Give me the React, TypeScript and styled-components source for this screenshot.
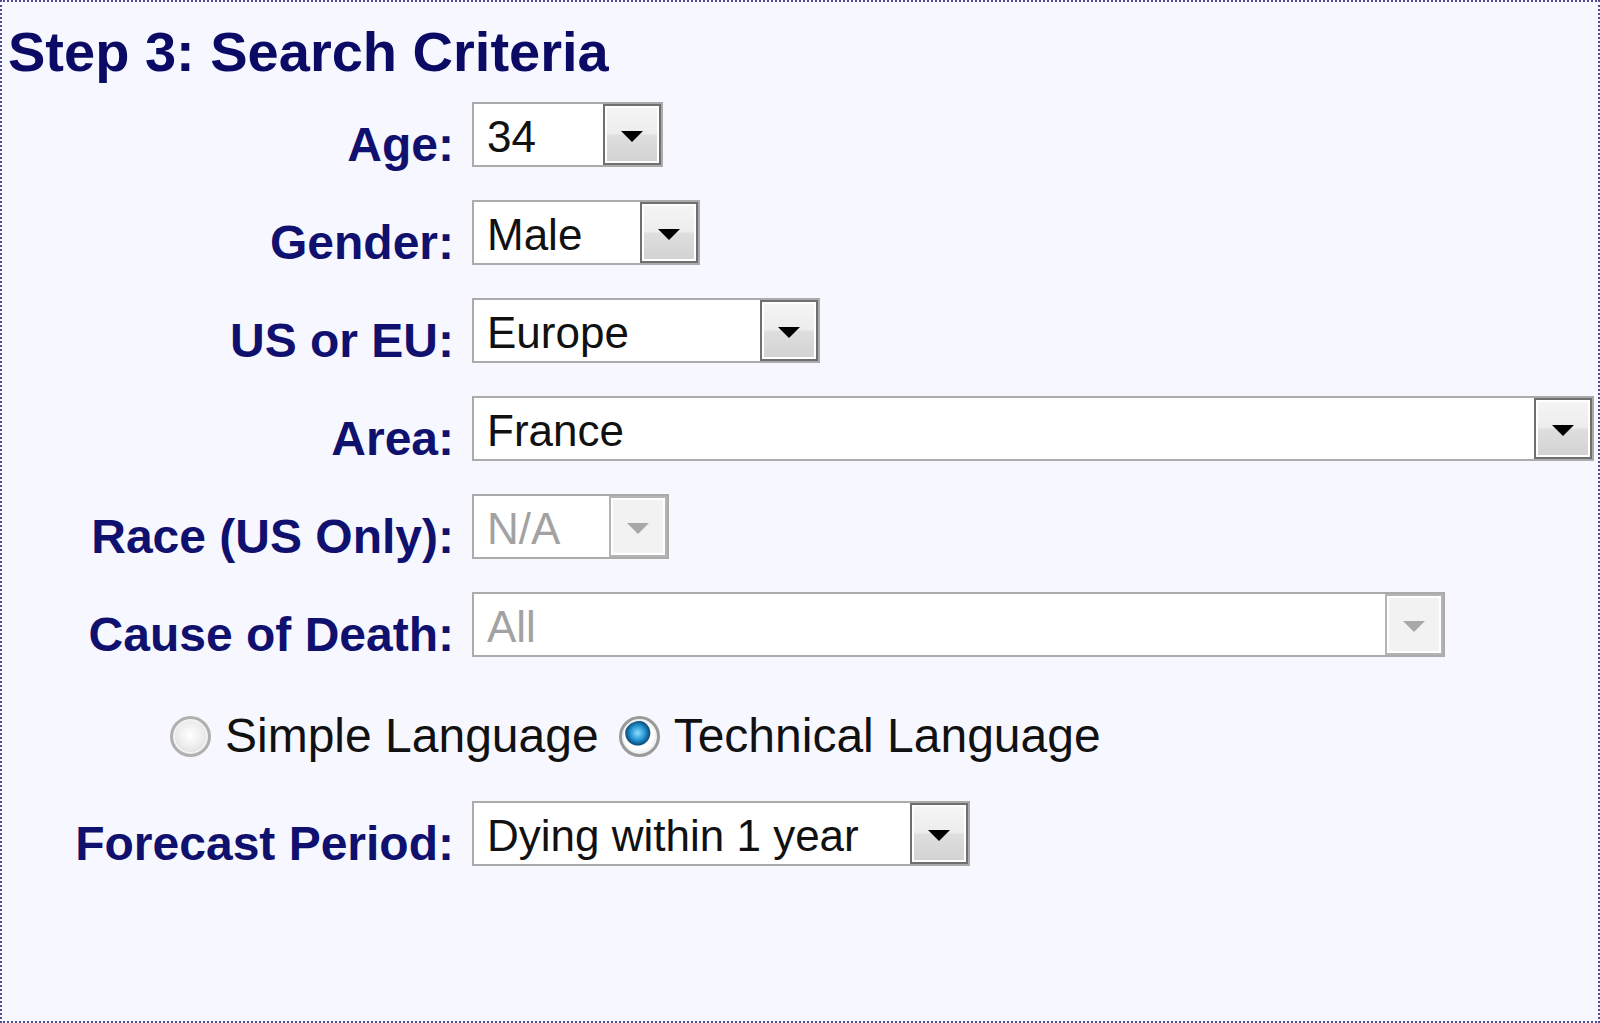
import React from 'react';
import styled, { createGlobalStyle } from 'styled-components';

const GlobalStyle = createGlobalStyle`
  html, body {
    margin: 0;
    padding: 0;
    background: #f7f7ff;
  }
  body {
    font-family: "Liberation Sans", Arial, sans-serif;
  }
`

const Panel = styled.div`
  box-sizing: border-box;
  width: 1600px;
  height: 1023px;
  border: 2px dotted #4e4e90;
  background: #f7f7ff;
  padding: 18px 0 0 6px;
  overflow: hidden;
`

const Heading = styled.h2`
  margin: 0;
  font-size: 56px;
  line-height: 64px;
  font-weight: bold;
  color: #0b0b66;
  white-space: pre;
`

const Form = styled.div`
  display: flex;
  flex-direction: column;
  margin-top: 18px;
`

const Row = styled.div<{ $top?: number }>`
  display: grid;
  grid-template-columns: 446px 1fr;
  column-gap: 18px;
  align-items: end;
  margin-top: ${(p) => p.$top ?? 0}px;
`

const Label = styled.label`
  font-size: 48px;
  line-height: 48px;
  font-weight: bold;
  color: #10106f;
  text-align: right;
  white-space: nowrap;
  margin-bottom: -2px;
`

const SelectBox = styled.div<{ $width: number; $disabled?: boolean }>`
  box-sizing: border-box;
  width: ${(p) => p.$width}px;
  height: 65px;
  border: 2px solid #ababab;
  background: #fff;
  display: flex;
  align-items: stretch;
  color: ${(p) => (p.$disabled ? '#a2a2a2' : '#111')};
`

const Value = styled.span`
  flex: 1;
  font-size: 44px;
  line-height: 61px;
  padding: 2px 0 0 13px;
  white-space: nowrap;
  overflow: hidden;
`

const DropButton = styled.div<{ $disabled?: boolean }>`
  box-sizing: border-box;
  width: 58px;
  border: 2px solid ${(p) => (p.$disabled ? '#b4b4b4' : '#6f6f6f')};
  box-shadow: inset 0 0 0 2px #fff;
  background: ${(p) =>
    p.$disabled
      ? '#f2f2f2'
      : 'linear-gradient(#f5f5f5 0%, #ededed 48%, #dedede 52%, #d2d2d2 100%)'};
  display: flex;
  align-items: center;
  justify-content: center;
`

const Arrow = styled.div<{ $disabled?: boolean }>`
  width: 0;
  height: 0;
  border-left: 11px solid transparent;
  border-right: 11px solid transparent;
  border-top: 11px solid ${(p) => (p.$disabled ? '#a8a8a8' : '#000')};
  margin-top: 4px;
`

const RadioRow = styled.div`
  display: flex;
  align-items: center;
  height: 48px;
  margin-top: 55px;
  padding-left: 162px;
`

const RadioOption = styled.label`
  display: flex;
  align-items: center;
  gap: 14px;
  font-size: 48px;
  line-height: 48px;
  color: #111;
  margin-right: 20px;
  white-space: nowrap;
`

const RadioCircle = styled.span<{ $checked?: boolean }>`
  box-sizing: border-box;
  width: 41px;
  height: 41px;
  border-radius: 50%;
  border: 3px solid ${(p) => (p.$checked ? '#9a9a9a' : '#b0b0b0')};
  box-shadow: inset 0 0 0 2px #f2f2f2;
  background: ${(p) =>
    p.$checked
      ? 'radial-gradient(circle at 45% 40%, #8fdcff 0%, #2a9ad6 24%, #0b4f80 42%, #ffffff 46%, #ffffff 58%, #c4c4c4 100%)'
      : 'radial-gradient(circle at 50% 45%, #ffffff 0%, #eeeeee 45%, #d2d2d2 100%)'};
  display: inline-block;
`

type SelectProps = { value: string; width: number; disabled?: boolean };

const Select: React.FC<SelectProps> = ({ value, width, disabled }) => (
  <SelectBox $width={width} $disabled={disabled}>
    <Value>{value}</Value>
    <DropButton $disabled={disabled}>
      <Arrow $disabled={disabled} />
    </DropButton>
  </SelectBox>
)

const fields = [
  { label: 'Age:', value: '34', width: 191 },
  { label: 'Gender:', value: 'Male', width: 228 },
  { label: 'US or EU:', value: 'Europe', width: 348 },
  { label: 'Area:', value: 'France', width: 1122 },
  { label: 'Race (US Only):', value: 'N/A', width: 197, disabled: true },
  { label: 'Cause of Death:', value: 'All', width: 973, disabled: true },
]

export default function App() {
  return (
    <>
      <GlobalStyle />
      <Panel>
        <Heading>Step 3: Search Criteria</Heading>
        <Form>
          {fields.map((f, i) => (
            <Row key={f.label} $top={i === 0 ? 0 : 33}>
              <Label>{f.label}</Label>
              <Select value={f.value} width={f.width} disabled={f.disabled} />
            </Row>
          ))}
          <RadioRow>
            <RadioOption>
              <RadioCircle />
              Simple Language
            </RadioOption>
            <RadioOption>
              <RadioCircle $checked />
              Technical Language
            </RadioOption>
          </RadioRow>
          <Row $top={41}>
            <Label>Forecast Period:</Label>
            <Select value="Dying within 1 year" width={498} />
          </Row>
        </Form>
      </Panel>
    </>
  )
}
